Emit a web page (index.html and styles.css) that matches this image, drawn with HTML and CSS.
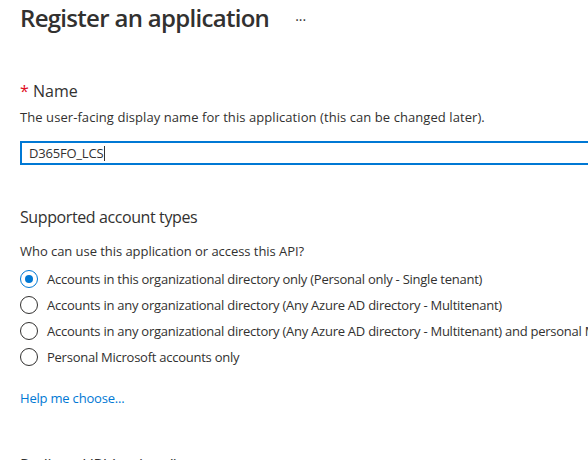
FILE: index.html
```html
<!DOCTYPE html>
<html>
<head>
<meta charset="utf-8">
<link rel="stylesheet" href="styles.css">
</head>
<body>
<div class="page">
  <div class="header">
    <h1 class="title">Register an application</h1>
    <span class="more">···</span>
  </div>

  <div class="field">
    <div class="label"><span class="req">*</span> Name</div>
    <div class="desc">The user-facing display name for this application (this can be changed later).</div>
    <div class="input"><span class="value">D365FO_LCS</span><span class="caret"></span></div>
  </div>

  <div class="section">
    <div class="section-title">Supported account types</div>
    <div class="desc question">Who can use this application or access this API?</div>
    <div class="radios">
      <div class="radio"><span class="dot checked"></span><span class="rtext">Accounts in this organizational directory only (Personal only - Single tenant)</span></div>
      <div class="radio"><span class="dot"></span><span class="rtext">Accounts in any organizational directory (Any Azure AD directory - Multitenant)</span></div>
      <div class="radio"><span class="dot"></span><span class="rtext">Accounts in any organizational directory (Any Azure AD directory - Multitenant) and personal Microsoft accounts</span></div>
      <div class="radio"><span class="dot"></span><span class="rtext">Personal Microsoft accounts only</span></div>
    </div>
    <a class="link">Help me choose...</a>
  </div>

  <div class="section next">
    <div class="section-title">Redirect URI (optional)</div>
  </div>
</div>
</body>
</html>
```

FILE: styles.css
```css
html, body {
  margin: 0;
  padding: 0;
  background: #ffffff;
  overflow: hidden;
}
body {
  font-family: "Open Sans", "Noto Sans", sans-serif;
  color: #323130;
  width: 588px;
  height: 460px;
}
.page {
  padding-left: 20px;
}
.header {
  display: flex;
  align-items: center;
  gap: 26px;
  height: 36px;
}
.title {
  margin: 0;
  font-size: 24px;
  font-weight: 600;
  line-height: 32px;
  letter-spacing: -0.7px;
  white-space: nowrap;
}
.more {
  font-size: 14px;
  color: #323130;
  margin-top: 2px;
}
.field {
  margin-top: 44px;
}
.label {
  font-size: 16px;
  line-height: 22px;
}
.req {
  color: #e00b1c;
}
.desc {
  font-size: 13px;
  line-height: 18px;
  margin-top: 6px;
  letter-spacing: 0.07px;
  white-space: nowrap;
}
.input {
  margin-top: 15px;
  height: 20px;
  border: 2px solid #0078d4;
  border-right: none;
  margin-right: -20px;
  display: flex;
  align-items: center;
  padding-left: 7px;
  font-size: 13px;
  letter-spacing: -0.2px;
}
.caret {
  width: 1px;
  height: 15px;
  background: #323130;
  margin-left: 1px;
}
.section {
  margin-top: 41px;
}
.section-title {
  font-size: 16px;
  line-height: 22px;
  letter-spacing: -0.4px;
  white-space: nowrap;
}
.question {
  margin-top: 14px;
  letter-spacing: -0.05px;
}
.radios {
  display: flex;
  flex-direction: column;
  gap: 8px;
  margin-top: 10px;
}
.radio {
  display: flex;
  align-items: center;
  gap: 9px;
  height: 18px;
  font-size: 13px;
  letter-spacing: -0.25px;
  white-space: nowrap;
}
.dot {
  flex: none;
  box-sizing: border-box;
  width: 18px;
  height: 18px;
  border: 1px solid #323130;
  border-radius: 50%;
  position: relative;
}
.dot.checked {
  border-color: #0078d4;
}
.dot.checked::after {
  content: "";
  position: absolute;
  left: 4px;
  top: 4px;
  width: 8px;
  height: 8px;
  border-radius: 50%;
  background: #0078d4;
}
.link {
  display: block;
  margin-top: 23px;
  font-size: 13px;
  line-height: 18px;
  letter-spacing: -0.2px;
  color: #0078d4;
}
.next {
  margin-top: 47px;
}
```
